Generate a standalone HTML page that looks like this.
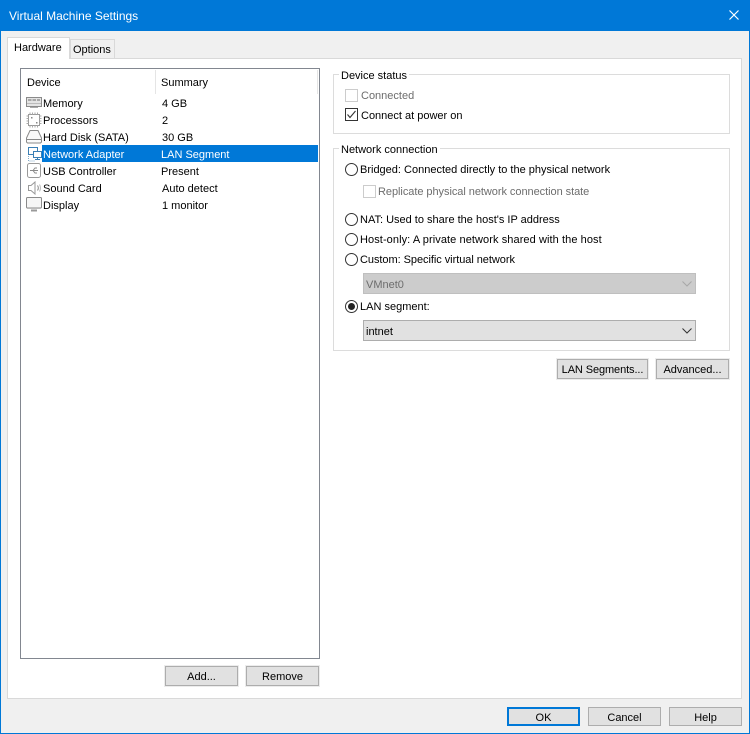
<!DOCTYPE html>
<html><head><meta charset="utf-8"><style>
html,body{margin:0;padding:0;width:750px;height:734px;overflow:hidden;background:#f0f0f0}
body{position:relative;font:11px/16px "Liberation Sans",sans-serif;color:#000}
div,span,svg{position:absolute;box-sizing:border-box}
.t{white-space:nowrap;height:16px;margin-top:1px}
.d{color:#6d6d6d}
.btn{background:#e1e1e1;border:1px solid #adadad;text-align:center;white-space:nowrap;line-height:20px;outline:1px solid #ececec}
.fs{border:1px solid #dcdcdc}
.cb{width:13px;height:13px;border:1px solid #333;background:#fff}
.cb.dis{border-color:#ccc}
.r{width:13px;height:13px;border:1px solid #333;border-radius:50%;background:#fff;left:345px}
.lg{background:#fff;padding:0 2px;height:14px;line-height:14px;white-space:nowrap;margin-top:1px}
</style></head><body>
<div style="left:0;top:0;width:750px;height:734px;border:1px solid #0078d7;border-top:0"></div>
<div style="left:0;top:0;width:750px;height:31px;background:#0078d7"></div>
<div class="t" style="left:9px;top:7px;color:#fff;font-size:12px">Virtual Machine Settings</div>
<svg style="left:729px;top:10px" width="10" height="10" viewBox="0 0 10 10"><path d="M.5 .5L9.500 9.500M9.500 .5L.5 9.500" stroke="#fff" stroke-width="1.200" fill="none"/></svg>

<div style="left:7px;top:58px;width:735px;height:641px;background:#fff;border:1px solid #d9d9d9"></div>
<div style="left:70px;top:39px;width:45px;height:20px;background:#f0f0f0;border:1px solid #d9d9d9"></div>
<div class="t" style="left:73px;top:41px">Options</div>
<div style="left:7px;top:37px;width:63px;height:22px;background:#fff;border:1px solid #d9d9d9;border-bottom:0"></div>
<div class="t" style="left:14px;top:39px">Hardware</div>

<div style="left:20px;top:68px;width:300px;height:591px;border:1px solid #828790;background:#fff"></div>
<div style="left:155px;top:70px;width:1px;height:24px;background:#e5e5e5"></div>
<div style="left:317px;top:70px;width:1px;height:24px;background:#e5e5e5"></div>
<div class="t" style="left:27px;top:74px">Device</div>
<div class="t" style="left:161px;top:74px">Summary</div>
<div style="left:42px;top:145px;width:276px;height:17px;background:#0078d7"></div>

<div class="t" style="left:43px;top:95px">Memory</div><div class="t" style="left:162px;top:95px">4 GB</div>
<div class="t" style="left:43px;top:112px">Processors</div><div class="t" style="left:162px;top:112px">2</div>
<div class="t" style="left:43px;top:129px">Hard Disk (SATA)</div><div class="t" style="left:162px;top:129px">30 GB</div>
<div class="t" style="left:43px;top:146px;color:#fff">Network Adapter</div><div class="t" style="left:161px;top:146px;color:#fff">LAN Segment</div>
<div class="t" style="left:43px;top:163px">USB Controller</div><div class="t" style="left:161px;top:163px">Present</div>
<div class="t" style="left:43px;top:180px">Sound Card</div><div class="t" style="left:162px;top:180px">Auto detect</div>
<div class="t" style="left:43px;top:197px">Display</div><div class="t" style="left:162px;top:197px">1 monitor</div>

<svg style="left:26px;top:97px" width="16" height="12" viewBox="0 0 16 12" fill="none"><rect x=".5" y=".5" width="15" height="9" fill="#e4e4e4" stroke="#8a8a8a"/><path d="M2 2h3.500v2H2zM6.500 2H10v2H6.500zM11 2h3v2h-3z" fill="#a8a8a8"/><path d="M1 6.500h14" stroke="#bbb"/><path d="M4 10.500h8" stroke="#aaa"/></svg>
<svg style="left:26px;top:112px" width="16" height="16" viewBox="0 0 16 16" fill="none"><rect x="2.500" y="2.500" width="11" height="11" fill="#fff" stroke="#999"/><path d="M4 .5v2M6.500 .5v2M9 .5v2M11.500 .5v2M4 13.500v2M6.500 13.500v2M9 13.500v2M11.500 13.500v2M.5 4h2M.5 6.500h2M.5 9h2M.5 11.500h2M13.500 4h2M13.500 6.500h2M13.500 9h2M13.500 11.500h2" stroke="#aaa"/><path d="M5 5h1.500v1.500H5zM10 10h1.500v1.500H10z" fill="#888"/></svg>
<svg style="left:26px;top:130px" width="16" height="14" viewBox="0 0 16 14" fill="none"><path d="M4 .5h8l3.500 7.500v4l-1 1h-13l-1-1V8z" fill="#fafafa" stroke="#8a8a8a"/><path d="M1 9.500h14" stroke="#8a8a8a"/></svg>
<svg style="left:26px;top:146px" width="16" height="16" viewBox="0 0 16 16" fill="none"><rect x="2.500" y="1.500" width="9" height="7" fill="#fff" stroke="#3b7fb5"/><rect x="7.500" y="5.500" width="8" height="6" fill="#fff" stroke="#3b7fb5"/><path d="M11.500 11.500v2M9 13.500h5" stroke="#3b7fb5"/><path d="M2.500 10v5h6" stroke="#7fa8c8" stroke-dasharray="1 1"/></svg>
<svg style="left:27px;top:163px" width="14" height="15" viewBox="0 0 14 15" fill="none"><rect x=".5" y=".5" width="13" height="14" rx="2" fill="#fff" stroke="#999"/><path d="M3 7.500h8M6 7.500l2-2.500h2M6 7.500l2 2.500h2" stroke="#8a8a8a"/></svg>
<svg style="left:28px;top:181px" width="14" height="14" viewBox="0 0 14 14" fill="none"><path d="M.5 4.500h2.500l4-3.500v12l-4-3.500H.5z" fill="#fff" stroke="#999"/><path d="M9.500 4.500c1 1.500 1 3.500 0 5" stroke="#888"/><path d="M11.500 3.500c1.200 2.200 1.200 4.800 0 7" stroke="#bbb"/></svg>
<svg style="left:26px;top:197px" width="16" height="15" viewBox="0 0 16 15" fill="none"><rect x=".5" y=".5" width="15" height="10.500" rx="1" fill="#f6f6f6" stroke="#8a8a8a"/><path d="M1 11.500h14" stroke="#bbb"/><path d="M5 13.500h6" stroke="#999" stroke-width="2"/></svg>

<div class="fs" style="left:333px;top:74px;width:397px;height:60px"></div>
<div class="lg" style="left:339px;top:68px">Device status</div>
<div class="cb dis" style="left:345px;top:89px"></div>
<div class="t d" style="left:361px;top:87px">Connected</div>
<div class="cb" style="left:345px;top:108px"></div>
<svg style="left:345px;top:108px" width="13" height="13" viewBox="0 0 13 13"><path d="M2.500 6.500l2.500 3 5.500-6.500" stroke="#333" stroke-width="1.100" fill="none"/></svg>
<div class="t" style="left:361px;top:107px">Connect at power on</div>

<div class="fs" style="left:333px;top:148px;width:397px;height:203px"></div>
<div class="lg" style="left:339px;top:142px">Network connection</div>
<div class="r" style="top:163px"></div><div class="t" style="left:360px;top:161px">Bridged: Connected directly to the physical network</div>
<div class="cb dis" style="left:363px;top:185px"></div><div class="t d" style="left:378px;top:183px;letter-spacing:-.05px">Replicate physical network connection state</div>
<div class="r" style="top:213px"></div><div class="t" style="left:360px;top:211px">NAT: Used to share the host's IP address</div>
<div class="r" style="top:233px"></div><div class="t" style="left:360px;top:231px;letter-spacing:.08px">Host-only: A private network shared with the host</div>
<div class="r" style="top:253px"></div><div class="t" style="left:360px;top:251px;letter-spacing:-.05px">Custom: Specific virtual network</div>
<div style="left:363px;top:273px;width:333px;height:21px;background:#ccc;border:1px solid #bfbfbf"></div>
<div class="t" style="left:366px;top:276px;color:#6d6d6d">VMnet0</div>
<svg style="left:682px;top:281px" width="10" height="6" viewBox="0 0 10 6"><path d="M.5 .5L5 5 9.500 .5" stroke="#a8a8a8" fill="none"/></svg>
<div class="r" style="top:300px"></div><div style="left:348px;top:303px;width:7px;height:7px;border-radius:50%;background:#222"></div>
<div class="t" style="left:360px;top:298px">LAN segment:</div>
<div style="left:363px;top:320px;width:333px;height:21px;background:#e1e1e1;border:1px solid #adadad"></div>
<div class="t" style="left:366px;top:323px">intnet</div>
<svg style="left:682px;top:328px" width="10" height="6" viewBox="0 0 10 6"><path d="M.5 .5L5 5 9.500 .5" stroke="#333" fill="none"/></svg>

<div class="btn" style="left:557px;top:359px;width:91px;height:20px;letter-spacing:-.1px">LAN Segments...</div>
<div class="btn" style="left:656px;top:359px;width:73px;height:20px">Advanced...</div>
<div class="btn" style="left:165px;top:666px;width:73px;height:20px">Add...</div>
<div class="btn" style="left:246px;top:666px;width:73px;height:20px">Remove</div>
<div class="btn" style="left:507px;top:707px;width:73px;height:19px;border:2px solid #0078d7;outline:0;line-height:19px">OK</div>
<div class="btn" style="left:588px;top:707px;width:73px;height:19px;outline:0;line-height:21px">Cancel</div>
<div class="btn" style="left:669px;top:707px;width:73px;height:19px;outline:0;line-height:21px">Help</div>
</body></html>
